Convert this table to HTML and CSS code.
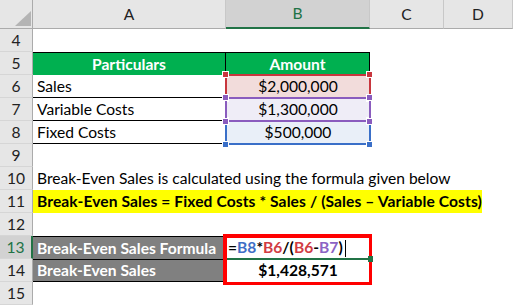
FILE: index.html
```html
<!DOCTYPE html>
<html>
<head>
<meta charset="utf-8">
<link rel="stylesheet" href="styles.css">
</head>
<body>
<div class="wrap">
<div class="sheet">
  <div class="corner"><svg width="33" height="29" viewBox="0 0 33 29"><polygon points="15,26 31,26 31,11" fill="#b4b4b4"/></svg></div>
  <div class="ch">A</div><div class="ch sel">B</div><div class="ch">C</div><div class="ch">D</div>

  <div class="rh">4</div><div class="c"></div><div class="c"></div><div class="c"></div><div class="c"></div>

  <div class="rh">5</div><div class="c hd hd-a">Particulars</div><div class="c hd hd-b">Amount</div><div class="c"></div><div class="c"></div>

  <div class="rh">6</div><div class="c ln">Sales</div><div class="c num pink">$2,000,000</div><div class="c"></div><div class="c"></div>

  <div class="rh">7</div><div class="c ln">Variable Costs</div><div class="c num lav">$1,300,000</div><div class="c"></div><div class="c"></div>

  <div class="rh">8</div><div class="c ln">Fixed Costs</div><div class="c num sky">$500,000</div><div class="c"></div><div class="c"></div>

  <div class="rh">9</div><div class="c"></div><div class="c"></div><div class="c"></div><div class="c"></div>

  <div class="rh">10</div><div class="c wide">Break-Even Sales is calculated using the formula given below</div>

  <div class="rh">11</div><div class="c wide"><span class="hl">Break-Even Sales = Fixed Costs * Sales / (Sales – Variable Costs)</span></div>

  <div class="rh">12</div><div class="c"></div><div class="c"></div><div class="c"></div><div class="c"></div>

  <div class="rh sel">13</div><div class="c gr">Break-Even Sales Formula</div><div class="c formula">=<span class="fb">B8</span>*<span class="fr">B6</span>/(<span class="fr">B6</span>-<span class="fp">B7</span>)<span class="caret"></span></div><div class="c"></div><div class="c"></div>

  <div class="rh">14</div><div class="c gr gr-last">Break-Even Sales</div><div class="c num bold">$1,428,571</div><div class="c"></div><div class="c"></div>

  <div class="rh">15</div><div class="c"></div><div class="c"></div><div class="c"></div><div class="c"></div>
</div>
<div class="overlay">
  <div class="ref ref-red"></div>
  <div class="ref ref-blue"></div>
  <div class="ref ref-purple"></div>
  <div class="edit-line"></div>
  <div class="redbox"></div>
</div>
</div>
</body>
</html>
```
FILE: styles.css
```css
* { box-sizing: border-box; }
body {
  margin: 0;
  background: #fff;
  font-family: Lato, "Open Sans", sans-serif;
  font-size: 15.6px;
  color: #000;
}
.wrap { position: relative; width: 513px; }
.sheet, .overlay {
  display: grid;
  grid-template-columns: 33px 193px 144px 74px 69px;
  grid-template-rows: 29px repeat(12, 23px);
  width: 513px;
}
.overlay {
  position: absolute;
  left: 0;
  top: 0;
  pointer-events: none;
}
.corner {
  background: #e6e6e6;
  border-right: 1px solid #ababab;
  border-bottom: 1px solid #ababab;
}
.corner svg { display: block; }
.ch {
  background: #e6e6e6;
  border-bottom: 1px solid #ababab;
  border-right: 1px solid #c8c8c8;
  text-align: center;
  line-height: 28px;
  color: #222;
}
.ch.sel {
  background: #d2d2d2;
  color: #217346;
  border-bottom: 2px solid #217346;
  line-height: 27px;
}
.rh {
  background: #e6e6e6;
  border-right: 1px solid #ababab;
  border-bottom: 1px solid #d6d6d6;
  text-align: center;
  line-height: 22px;
  color: #222;
}
.rh.sel {
  background: #d2d2d2;
  color: #217346;
  border-right: 2px solid #217346;
}
.c {
  padding: 0 4px;
  line-height: 23px;
  white-space: nowrap;
}
.wide { grid-column: 2 / 6; }
.hl {
  display: block;
  width: 449px;
  margin-left: -4px;
  padding-left: 4px;
  background: #ffff00;
  font-weight: bold;
  letter-spacing: 0.1px;
}
.hd {
  background: #00b050;
  color: #fff;
  font-weight: bold;
  text-align: center;
  border-top: 1px solid #000;
  border-right: 1px solid #000;
  line-height: 22px;
}
.ln { border-bottom: 1px solid #000; line-height: 22px; }
.num { text-align: center; }
.bold { font-weight: bold; }
.pink { background: #f2dcdb; }
.lav { background: #efedf7; }
.sky { background: #e9eff8; }
.gr {
  background: #808080;
  color: #fff;
  font-weight: bold;
  border-top: 1px solid #000;
  line-height: 22px;
}
.gr-last { border-bottom: 1px solid #000; line-height: 21px; }
.formula { font-weight: bold; padding-left: 2px; }
.fb { color: #3f6fc6; }
.fr { color: #d13c44; }
.fp { color: #8c63c4; }
.caret {
  display: inline-block;
  width: 1px;
  height: 17px;
  background: #000;
  vertical-align: -4px;
  margin-left: 2px;
}
.ref {
  grid-column: 3;
  margin: -1px;
  border: 2px solid currentColor;
  position: relative;
}
.ref::before, .ref::after {
  content: "";
  position: absolute;
  left: -4px;
  width: 5px;
  height: 5px;
  background: currentColor;
  box-shadow: 0 0 0 1px #fff, 144px 0 0 0 currentColor, 144px 0 0 1px #fff;
}
.ref::before { top: -4px; }
.ref::after { bottom: -4px; }
.ref-red { grid-row: 4; color: #c8363e; z-index: 1; }
.ref-blue { grid-row: 6; color: #3a6fc8; z-index: 1; }
.ref-purple { grid-row: 5; color: #8a5cbe; z-index: 2; }
.edit-line {
  grid-column: 3;
  grid-row: 11;
  align-self: end;
  height: 2px;
  margin: 0 0 -1px 1px;
  background: #217346;
  position: relative;
  z-index: 4;
}
.edit-line::after {
  content: "";
  position: absolute;
  right: -3px;
  top: -2px;
  width: 5px;
  height: 6px;
  background: #217346;
}
.redbox {
  grid-column: 3;
  grid-row: 11 / span 2;
  margin: -2px -2px -3px -3px;
  border: 4px solid #ff0000;
  border-right-width: 3px;
  border-bottom-width: 3px;
  z-index: 3;
}
```
